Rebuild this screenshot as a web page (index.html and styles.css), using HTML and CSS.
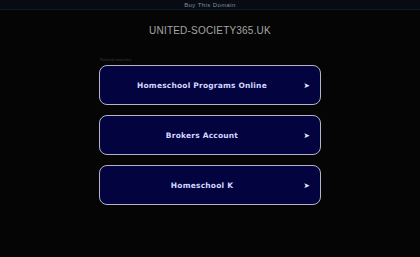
FILE: index.html
```html
<!DOCTYPE html>
<html>
<head>
<meta charset="utf-8">
<link rel="stylesheet" href="styles.css">
</head>
<body>
<div class="topbar"><span class="buy">Buy This Domain</span></div>
<div class="title">UNITED-SOCIETY365.UK</div>
<div class="results">
  <div class="label">Related searches</div>
  <a class="item"><span class="txt">Homeschool Programs Online</span><span class="arrow">&#10148;</span></a>
  <a class="item"><span class="txt">Brokers Account</span><span class="arrow">&#10148;</span></a>
  <a class="item"><span class="txt">Homeschool K</span><span class="arrow">&#10148;</span></a>
</div>
</body>
</html>
```
FILE: styles.css
```css
html, body { margin: 0; padding: 0; }
body {
  background: #050505;
  font-family: "Liberation Sans", Arial, sans-serif;
  width: 420px;
  height: 257px;
  overflow: hidden;
}
.topbar {
  height: 9px;
  background: #080c12;
  border-bottom: 1px solid #0d1b28;
  display: flex;
  justify-content: center;
  align-items: center;
}
.buy {
  font-size: 6px;
  color: #7f8ea3;
  letter-spacing: 0.4px;
}
.title {
  margin-top: 15px;
  text-align: center;
  font-size: 10px;
  color: #a6a6a6;
  letter-spacing: 0.2px;
  line-height: 12px;
}
.results {
  width: 222px;
  margin: 20px auto 0;
  display: flex;
  flex-direction: column;
  gap: 10px;
}
.label {
  font-size: 4px;
  color: #3a3a3a;
  line-height: 5px;
  margin-bottom: -7px;
  padding-left: 1px;
}
.item {
  box-sizing: border-box;
  height: 40px;
  background: #02033f;
  border: 1.5px solid #b4b4c4;
  border-radius: 8px;
  display: flex;
  align-items: center;
  justify-content: center;
  padding-right: 16px;
  position: relative;
  color: #d3d7ff;
  font-family: "DejaVu Sans", sans-serif;
  font-weight: bold;
  font-size: 7.5px;
  letter-spacing: 0.2px;
}
.arrow {
  position: absolute;
  right: 10px;
  font-size: 7.5px;
  color: #e8eaff;
}
```
